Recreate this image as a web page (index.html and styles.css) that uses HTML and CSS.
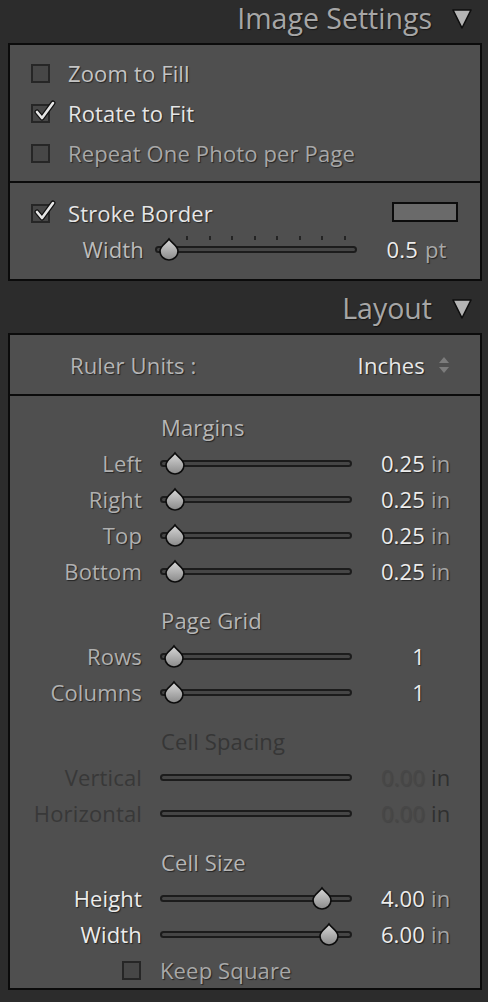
FILE: index.html
```html
<!DOCTYPE html>
<html>
<head>
<meta charset="utf-8">
<link rel="stylesheet" href="styles.css">
</head>
<body>
<div class="sidebar">
  <div class="header">
    <span class="header-title">Image Settings</span>
    <svg class="disclosure" width="22" height="22" viewBox="0 0 22 22"><path d="M2 2 L20 2 L11 20 Z" fill="#b4b4b4" stroke="#0e0e0e" stroke-width="1.6" stroke-linejoin="round"/></svg>
  </div>
  <div class="panel">
    <div class="section checks">
      <div class="check-row"><span class="cb"></span><span class="text normal">Zoom to Fill</span></div>
      <div class="check-row"><span class="cb checked"><svg class="tick" width="24" height="24" viewBox="0 0 24 24"><path d="M4 12 L9 18 L20 3" fill="none" stroke="#111" stroke-width="5" stroke-linecap="round" stroke-linejoin="round"/><path d="M4 12 L9 18 L20 3" fill="none" stroke="#e6e6e6" stroke-width="2.6" stroke-linecap="round" stroke-linejoin="round"/></svg></span><span class="text bright">Rotate to Fit</span></div>
      <div class="check-row"><span class="cb"></span><span class="text dim">Repeat One Photo per Page</span></div>
    </div>
    <div class="section stroke">
      <div class="check-row stroke-row"><span class="cb checked"><svg class="tick" width="24" height="24" viewBox="0 0 24 24"><path d="M4 12 L9 18 L20 3" fill="none" stroke="#111" stroke-width="5" stroke-linecap="round" stroke-linejoin="round"/><path d="M4 12 L9 18 L20 3" fill="none" stroke="#e6e6e6" stroke-width="2.6" stroke-linecap="round" stroke-linejoin="round"/></svg></span><span class="text bright">Stroke Border</span><span class="swatch"></span></div>
      <div class="width-row">
        <span class="lbl">Width</span>
        <div class="slider wide">
          <div class="ticks"><i></i><i></i><i></i><i></i><i></i><i></i><i></i><i></i></div>
          <div class="track"></div>
          <svg class="thumb" style="left:2px" width="24" height="24" viewBox="0 0 24 24"><defs><linearGradient id="g0" x1="0" y1="0" x2="0" y2="1"><stop offset="0" stop-color="#d8d8d8"/><stop offset="1" stop-color="#8a8a8a"/></linearGradient></defs><path d="M12 2 C14.5 6 21 9 21 14 A9 9 0 0 1 3 14 C3 9 9.5 6 12 2 Z" fill="url(#g0)" stroke="#0c0c0c" stroke-width="1.6"/></svg>
        </div>
        <span class="num">0.5</span><span class="unit">pt</span>
      </div>
    </div>
  </div>

  <div class="header second">
    <span class="header-title">Layout</span>
    <svg class="disclosure" width="22" height="22" viewBox="0 0 22 22"><path d="M2 2 L20 2 L11 20 Z" fill="#b4b4b4" stroke="#0e0e0e" stroke-width="1.6" stroke-linejoin="round"/></svg>
  </div>
  <div class="panel">
    <div class="section ruler">
      <span class="ruler-label">Ruler Units :</span>
      <span class="ruler-value">Inches</span>
      <svg class="stepper" width="12" height="18" viewBox="0 0 12 18"><path d="M6 1 L11 7 L1 7 Z" fill="#7c7c7c"/><path d="M1 11 L11 11 L6 17 Z" fill="#7c7c7c"/></svg>
    </div>
    <div class="section sliders">
      <div class="group">
        <div class="group-title">Margins</div>
        <div class="srow"><span class="lbl">Left</span><div class="slider"><div class="track"></div><svg class="thumb" style="left:3px" width="24" height="24" viewBox="0 0 24 24"><use href="#thumbshape"/></svg></div><span class="num">0.25</span><span class="unit">in</span></div>
        <div class="srow"><span class="lbl">Right</span><div class="slider"><div class="track"></div><svg class="thumb" style="left:3px" width="24" height="24" viewBox="0 0 24 24"><use href="#thumbshape"/></svg></div><span class="num">0.25</span><span class="unit">in</span></div>
        <div class="srow"><span class="lbl">Top</span><div class="slider"><div class="track"></div><svg class="thumb" style="left:3px" width="24" height="24" viewBox="0 0 24 24"><use href="#thumbshape"/></svg></div><span class="num">0.25</span><span class="unit">in</span></div>
        <div class="srow"><span class="lbl">Bottom</span><div class="slider"><div class="track"></div><svg class="thumb" style="left:3px" width="24" height="24" viewBox="0 0 24 24"><use href="#thumbshape"/></svg></div><span class="num">0.25</span><span class="unit">in</span></div>
      </div>
      <div class="group">
        <div class="group-title">Page Grid</div>
        <div class="srow"><span class="lbl">Rows</span><div class="slider"><div class="track"></div><svg class="thumb" style="left:2px" width="24" height="24" viewBox="0 0 24 24"><use href="#thumbshape"/></svg></div><span class="num bright-num">1</span><span class="unit"></span></div>
        <div class="srow"><span class="lbl">Columns</span><div class="slider"><div class="track"></div><svg class="thumb" style="left:2px" width="24" height="24" viewBox="0 0 24 24"><use href="#thumbshape"/></svg></div><span class="num bright-num">1</span><span class="unit"></span></div>
      </div>
      <div class="group disabled">
        <div class="group-title">Cell Spacing</div>
        <div class="srow"><span class="lbl">Vertical</span><div class="slider"><div class="track"></div></div><span class="num">0.00</span><span class="unit">in</span></div>
        <div class="srow"><span class="lbl">Horizontal</span><div class="slider"><div class="track"></div></div><span class="num">0.00</span><span class="unit">in</span></div>
      </div>
      <div class="group">
        <div class="group-title">Cell Size</div>
        <div class="srow hi"><span class="lbl">Height</span><div class="slider"><div class="track"></div><svg class="thumb" style="left:150px" width="24" height="24" viewBox="0 0 24 24"><use href="#thumbshape"/></svg></div><span class="num">4.00</span><span class="unit">in</span></div>
        <div class="srow hi"><span class="lbl">Width</span><div class="slider"><div class="track"></div><svg class="thumb" style="left:157px" width="24" height="24" viewBox="0 0 24 24"><use href="#thumbshape"/></svg></div><span class="num">6.00</span><span class="unit">in</span></div>
        <div class="keep-row"><span class="cb"></span><span class="text dim">Keep Square</span></div>
      </div>
    </div>
  </div>
</div>
<svg width="0" height="0" class="defs">
  <defs>
    <linearGradient id="g1" x1="0" y1="0" x2="0" y2="1"><stop offset="0" stop-color="#d8d8d8"/><stop offset="1" stop-color="#8a8a8a"/></linearGradient>
    <path id="thumbshape" d="M12 2 C14.5 6 21 9 21 14 A9 9 0 0 1 3 14 C3 9 9.5 6 12 2 Z" fill="url(#g1)" stroke="#0c0c0c" stroke-width="1.6"/>
  </defs>
</svg>
</body>
</html>
```
FILE: styles.css
```css
html, body {
  margin: 0;
  padding: 0;
  background: #2c2c2c;
}
body {
  width: 488px;
  height: 1002px;
  overflow: hidden;
  font-family: "Open Sans", Lato, "Liberation Sans", sans-serif;
  font-size: 22px;
  letter-spacing: 0.15px;
}
.defs { position: absolute; width: 0; height: 0; }
.sidebar {
  display: flex;
  flex-direction: column;
}
.header {
  height: 43px;
  display: flex;
  align-items: center;
  justify-content: flex-end;
  gap: 19px;
  padding-right: 15px;
  box-sizing: border-box;
  margin-top: -4px;
  margin-bottom: 4px;
}
.header.second {
  margin-top: 5px;
}
.header-title {
  font-size: 28.5px;
  letter-spacing: 0;
  color: #a6a6a6;
  text-shadow: 1px 1px 1px rgba(0,0,0,0.5);
}
.disclosure { display: block; margin-top: 2px; }
.panel {
  margin-left: 8px;
  width: 474px;
  box-sizing: border-box;
  border: 2px solid #0b0b0b;
  background: #4f4f4f;
}
.section + .section {
  border-top: 2px solid #0b0b0b;
}
.text, .lbl, .num, .unit, .group-title, .ruler-label, .ruler-value {
  text-shadow: 1px 1px 1px rgba(0,0,0,0.55);
}
.checks {
  padding: 8px 0;
}
.check-row {
  height: 40px;
  display: flex;
  align-items: center;
  padding-left: 21px;
}
.cb {
  position: relative;
  width: 19px;
  height: 19px;
  box-sizing: border-box;
  border: 2px solid #262626;
  background: #474747;
  margin-right: 18px;
  flex: none;
}
.tick {
  position: absolute;
  left: 0px;
  top: -6px;
}
.normal { color: #c4c4c4; }
.bright { color: #e6e6e6; }
.dim { color: #a8a8a8; }
.stroke {
  padding: 12px 0;
}
.stroke-row {
  height: 36px;
}
.swatch {
  margin-left: auto;
  margin-right: 22px;
  width: 66px;
  height: 20px;
  box-sizing: border-box;
  border: 2px solid #0c0c0c;
  background: #6a6a6a;
  margin-top: -2px;
}
.width-row {
  height: 36px;
  display: flex;
  align-items: center;
}
.width-row .lbl {
  width: 134px;
  text-align: right;
  color: #bcbcbc;
}
.slider {
  position: relative;
  height: 24px;
  width: 192px;
  margin-left: 18px;
  flex: none;
}
.slider.wide {
  width: 202px;
  margin-left: 11px;
}
.track {
  position: absolute;
  left: 0;
  right: 0;
  top: 9px;
  height: 7px;
  box-sizing: border-box;
  border: 2px solid #1c1c1c;
  border-radius: 4px;
  background: #464646;
}
.ticks {
  position: absolute;
  left: 31px;
  top: -1px;
  width: 160px;
  display: flex;
  justify-content: space-between;
}
.ticks i {
  display: block;
  width: 2px;
  height: 4px;
  background: #242424;
}
.thumb {
  position: absolute;
  top: 0px;
}
.width-row .num {
  width: 61px;
  text-align: right;
  color: #ececec;
}
.width-row .unit {
  padding-left: 7px;
  color: #a8a8a8;
}
.ruler {
  height: 59px;
  display: flex;
  align-items: center;
  padding-left: 60px;
  padding-right: 30px;
}
.ruler-label {
  color: #b4b4b4;
}
.ruler-value {
  margin-left: auto;
  color: #e8e8e8;
}
.stepper {
  margin-left: 13px;
  display: block;
}
.sliders {
  padding-top: 13px;
  display: flex;
  flex-direction: column;
  gap: 13px;
}
.group-title {
  height: 36px;
  line-height: 36px;
  padding-left: 151px;
  color: #b6b6b6;
}
.srow {
  height: 36px;
  display: flex;
  align-items: center;
}
.srow .lbl {
  width: 132px;
  text-align: right;
  color: #b0b0b0;
}
.srow .slider { margin-left: 18px; }
.srow .num {
  width: 73px;
  text-align: right;
  color: #ececec;
}
.srow .unit {
  padding-left: 6px;
  color: #a4a4a4;
}
.srow.hi .lbl { color: #ececec; }
.disabled .group-title { color: #363636; text-shadow: none; }
.disabled .lbl { color: #383838; text-shadow: none; }
.disabled .num { color: #474747; text-shadow: 1px 1px 1px rgba(0,0,0,0.15); }
.disabled .unit { color: #303030; text-shadow: none; }
.keep-row {
  height: 36px;
  display: flex;
  align-items: center;
  padding-left: 112px;
}
.keep-row .cb { margin-right: 19px; }
```
